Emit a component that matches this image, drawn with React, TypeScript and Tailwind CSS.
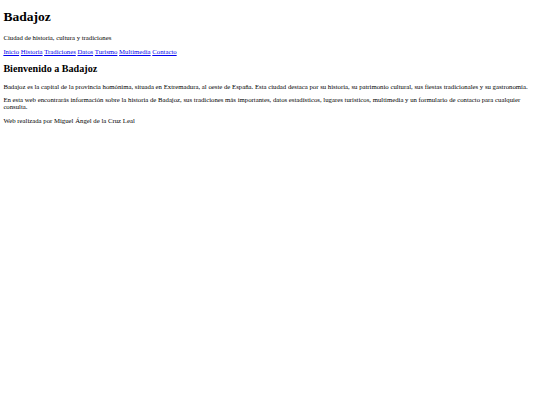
export default function App() {
  const links = ['Inicio', 'Historia', 'Tradiciones', 'Datos', 'Turismo', 'Multimedia', 'Contacto'];
  return (
    <div
      className="min-h-screen bg-white px-[3.375px] pb-[3.375px] text-[6.75px] leading-[normal] text-black"
      style={{ fontFamily: '"Liberation Serif", "Times New Roman", serif' }}
    >
      <header>
        <h1 className="my-[9.045px] text-[13.5px] font-bold leading-[normal]">Badajoz</h1>
        <p className="my-[6.75px]">Ciudad de historia, cultura y tradiciones</p>
        <nav>
          {links.map((l, i) => (
            <span key={l}>
              <a href="#" className="text-[#0000ee] underline">
                {l}
              </a>
              {i < links.length - 1 ? ' ' : ''}
            </span>
          ))}
        </nav>
      </header>
      <main>
        <section>
          <h2 className="my-[8.4px] text-[10.125px] font-bold leading-[normal]">Bienvenido a Badajoz</h2>
          <p className="my-[6.75px]">
            Badajoz es la capital de la provincia homónima, situada en Extremadura, al oeste de España. Esta ciudad destaca por su historia, su patrimonio cultural, sus fiestas tradicionales y su gastronomía.
          </p>
          <p className="my-[6.75px]">
            En esta web encontrarás información sobre la historia de Badajoz, sus tradiciones más importantes, datos estadísticos, lugares turísticos, multimedia y un formulario de contacto para cualquier consulta.
          </p>
        </section>
      </main>
      <footer>
        <p className="my-[6.75px]">Web realizada por Miguel Ángel de la Cruz Leal</p>
      </footer>
    </div>
  );
}
